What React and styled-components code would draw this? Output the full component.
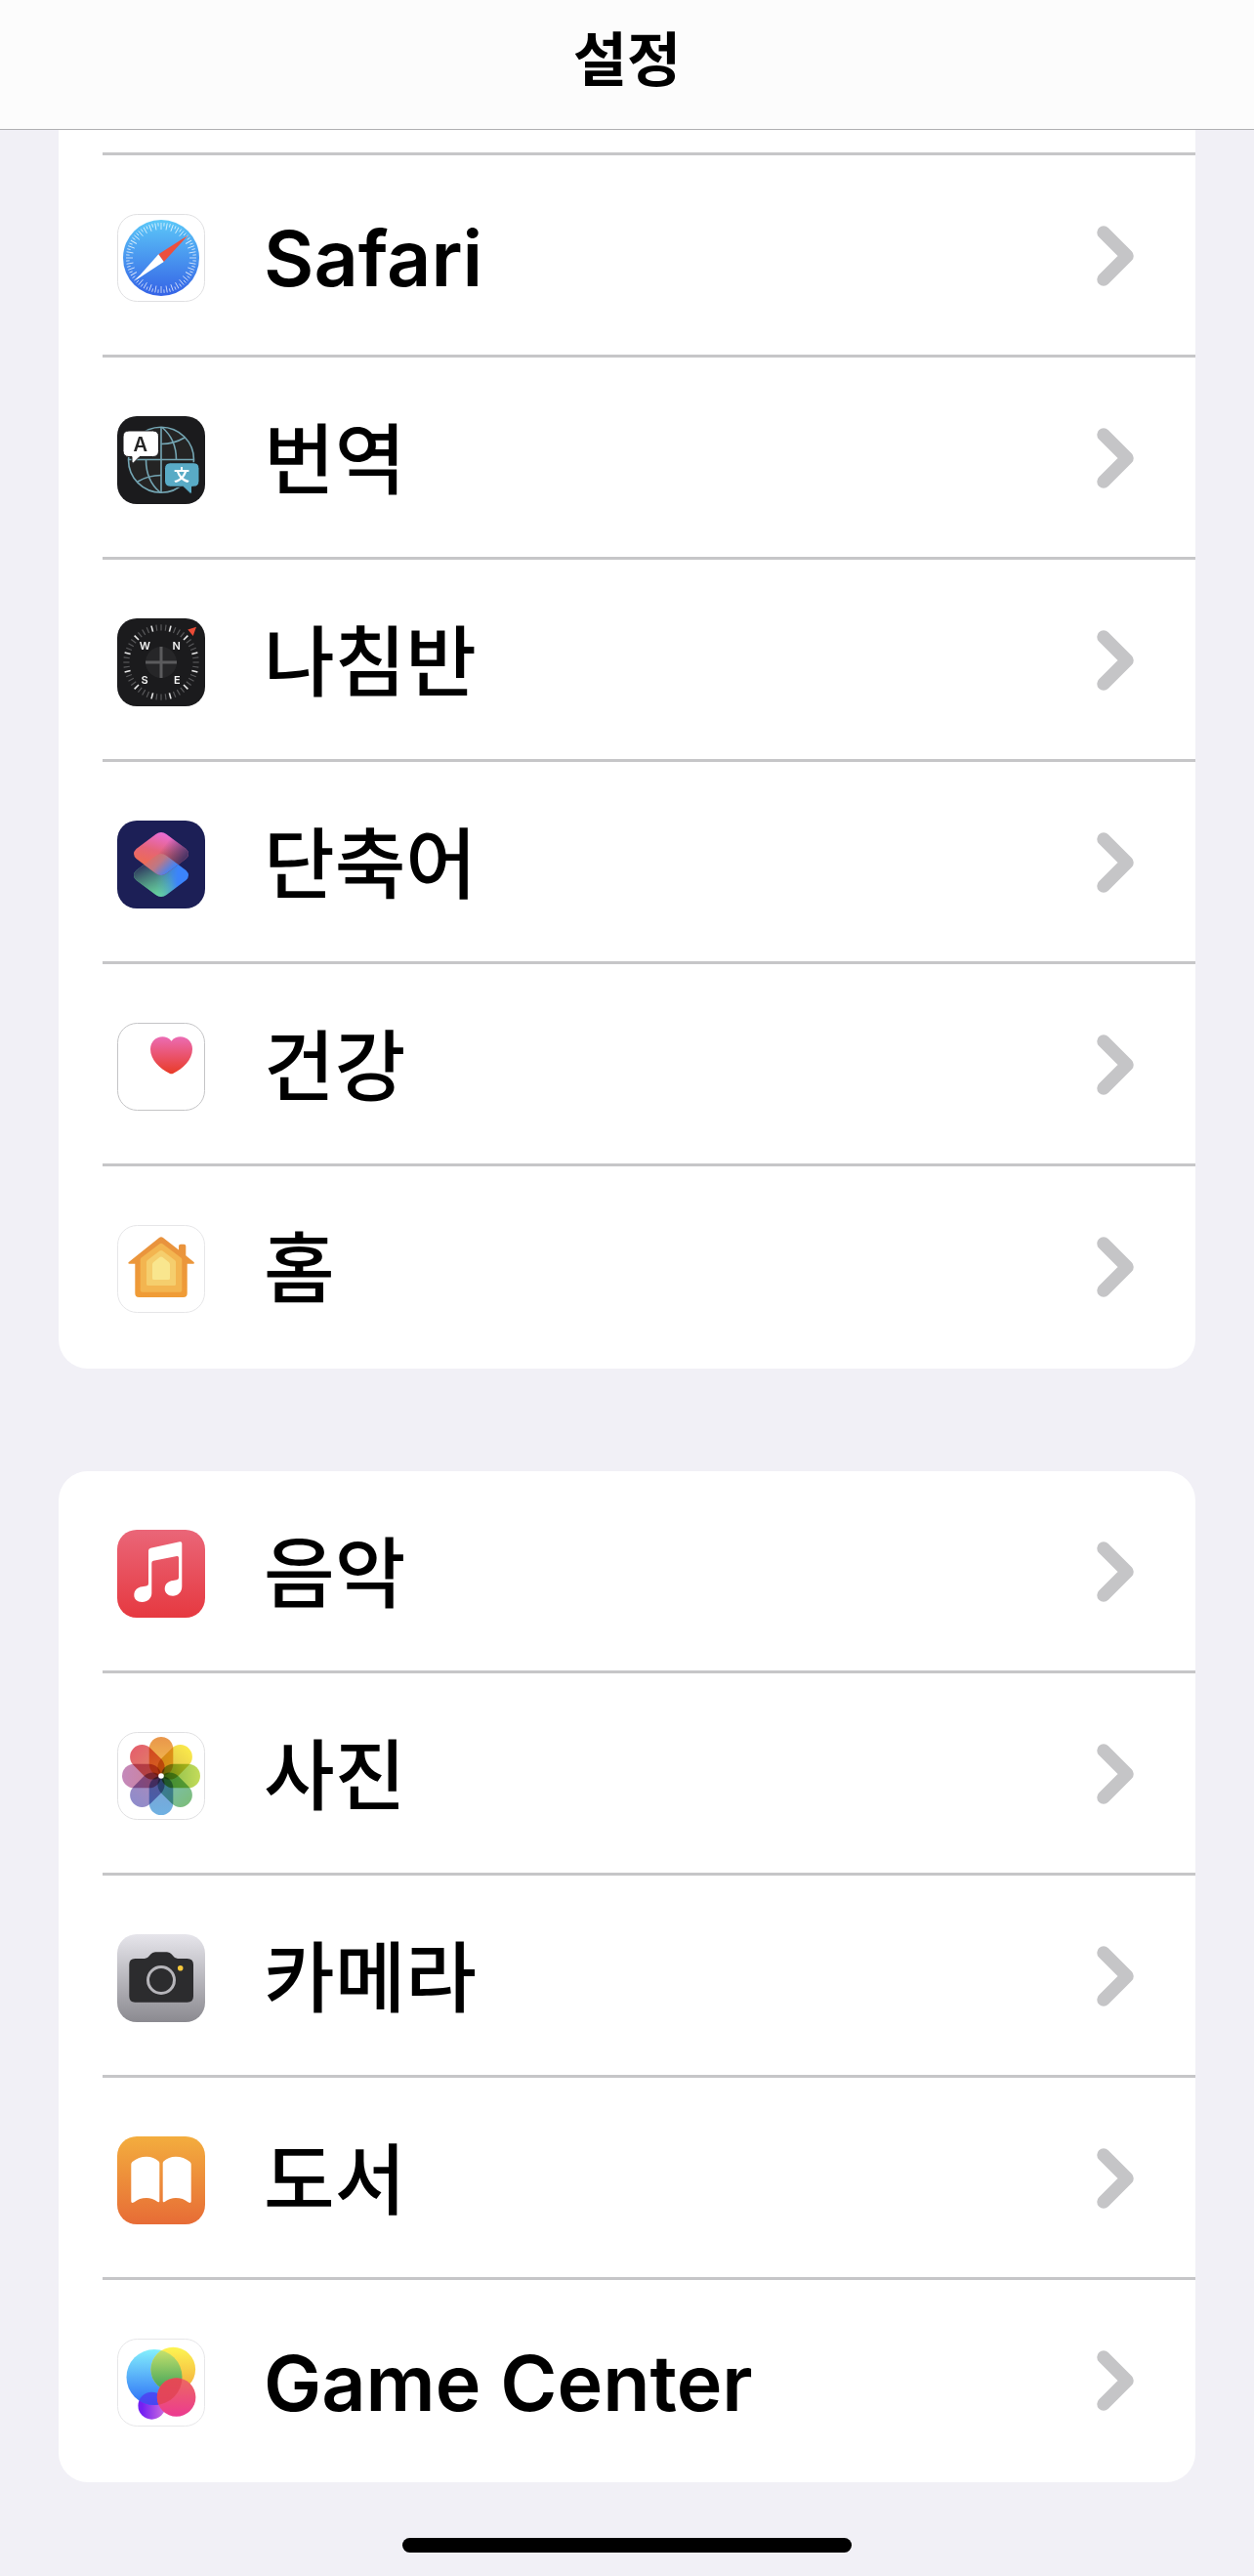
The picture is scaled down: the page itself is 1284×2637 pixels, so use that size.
import styled, { createGlobalStyle } from "styled-components";

const GlobalStyle = createGlobalStyle`
  * {
    box-sizing: border-box;
  }
  body {
    margin: 0;
    background-color: #f1f0f6;
    color: #000;
    font-family: Inter, "Noto Sans CJK KR", sans-serif;
  }
`;

const Page = styled.div`
  min-height: 100vh;
  display: flex;
  flex-direction: column;
`;

const Header = styled.header`
  display: flex;
  justify-content: center;
  padding: 16px 0 26px;
  background-color: #fcfcfc;
  border-bottom: 1px solid #b0b0b2;
`;

const Title = styled.h1`
  margin: 0;
  font-size: 60px;
  line-height: 90px;
  font-weight: 700;
`;

const Main = styled.main`
  display: flex;
  flex-direction: column;
  gap: 105px;
  padding: 0 60px;
`;

const Group = styled.ul`
  list-style: none;
  margin: 0;
  padding: 0 0 0 45px;
  background-color: #fff;
  border-radius: ${(props) => (props.$scrolled ? "0 0 30px 30px" : "30px")};
`;

const Item = styled.li`
  border-bottom: 3px solid #c6c6c8;

  &:last-child {
    border-bottom-color: transparent;
  }
`;

// the row that is scrolled away under the header
const HiddenItem = styled(Item)`
  height: 26px;
`;

const RowLink = styled.a`
  display: flex;
  align-items: center;
  height: 204px;
  padding: 6px 63px 0 15px;
  color: inherit;
  text-decoration: none;
`;

const Label = styled.span`
  flex: 1;
  margin-left: 60px;
  font-size: 79px;
  line-height: 120px;
  font-weight: ${(props) => (props.$latin ? 600 : 500)};
`;

const AppIcon = styled.svg`
  flex: none;
  width: 90px;
  height: 90px;
`;

const Chevron = styled.svg`
  flex: none;
  width: 38px;
  height: 62px;
  margin-bottom: 4px;
`;

const Footer = styled.footer`
  display: flex;
  justify-content: center;
  margin-top: auto;
  padding: 57px 0 24px;
`;

const HomeIndicator = styled.div`
  width: 460px;
  max-width: 60%;
  height: 15px;
  border-radius: 8px;
  background-color: #000;
`;

const Petal = styled.rect`
  mix-blend-mode: multiply;
`;

const Petals = styled.g`
  isolation: isolate;
`;

const Tile = ({ fill }) => <rect width="90" height="90" rx="20" fill={fill} />;

const OutlinedTile = ({ stroke }) => (
  <rect x="0.5" y="0.5" width="89" height="89" rx="20" fill="#fff" stroke={stroke} />
);

const Gradient = ({ id, from, to }) => (
  <linearGradient id={id} x1="0" y1="0" x2="0" y2="1">
    <stop offset="0" stopColor={from} />
    <stop offset="1" stopColor={to} />
  </linearGradient>
);

const SafariIcon = () => (
  <AppIcon viewBox="0 0 90 90" aria-hidden="true">
    <defs>
      <Gradient id="safari" from="#5cc8f8" to="#3563e6" />
    </defs>
    <OutlinedTile stroke="#e0e0e2" />
    <circle cx="45" cy="45" r="39" fill="url(#safari)" />
    {Array.from({ length: 72 }, (_, i) => (
      <line
        key={i}
        x1="45"
        x2="45"
        y1="9"
        y2={i % 2 ? 12.5 : 16}
        stroke="#fff"
        strokeOpacity="0.75"
        strokeWidth="0.9"
        transform={`rotate(${i * 5} 45 45)`}
      />
    ))}
    <path d="M72.7 21.7L42.3 41.3L47.7 49Z" fill="#ec4f3d" />
    <path d="M18.3 68.3L42.3 41.3L47.7 49Z" fill="#fff" />
  </AppIcon>
);

const TranslateIcon = () => (
  <AppIcon viewBox="0 0 90 90" aria-hidden="true">
    <Tile fill="#1b1b1d" />
    <g fill="none" stroke="#74a6b4" strokeWidth="1.6">
      <circle cx="45" cy="44.7" r="33.5" fill="#242424" />
      <path d="M45 11V78M12 44.5H78.5" />
      <path d="M46 11.5C56 20 60.5 31 60.5 44.5M45 28.5Q58 28.5 69 22" />
      <path d="M29.5 44.5C29.5 58 34 70 44 78M21 67Q32 60.5 45 60.5" />
    </g>
    <path
      d="M12 15H36.5Q42.5 15 42.5 21V35.5Q42.5 41.5 36.5 41.5H23L16.5 48Q15.3 48.5 15 47V41.5H12Q6 41.5 6 35.5V21Q6 15 12 15Z"
      fill="#fff"
      stroke="#1b1b1d"
      strokeWidth="1"
    />
    <path
      d="M54.5 47.7H78Q84 47.7 84 53.7V66.3Q84 72.3 78 72.3H76.5V78Q76 80 74.5 79L67.5 72.3H54.5Q48.5 72.3 48.5 66.3V53.7Q48.5 47.7 54.5 47.7Z"
      fill="#59abc6"
      stroke="#1b1b1d"
      strokeWidth="1"
    />
    <text x="23.7" y="36" fontSize="20" fontWeight="600" textAnchor="middle" fill="#242424">
      A
    </text>
    <text x="66" y="66" fontSize="16" fontWeight="700" textAnchor="middle" fill="#fff">
      文
    </text>
  </AppIcon>
);

const CompassIcon = () => (
  <AppIcon viewBox="0 0 90 90" aria-hidden="true">
    <Tile fill="#1b1b1d" />
    {Array.from({ length: 48 }, (_, i) => (
      <line
        key={i}
        x1="45"
        x2="45"
        y1="6.3"
        y2="12.5"
        stroke={i % 4 === 2 ? "#e8e8e8" : "#59595b"}
        strokeWidth={i % 4 === 2 ? 1.6 : 1.2}
        transform={`rotate(${i * 7.5} 45 45)`}
      />
    ))}
    <circle cx="45" cy="45" r="16" fill="#262628" />
    <path d="M45 29V61M29 45H61" stroke="#5b5b5d" strokeWidth="3" />
    <g fontSize="11" fontWeight="600" textAnchor="middle" fill="#f4f4f4">
      <text x="28.3" y="32.3">W</text>
      <text x="60.7" y="32.3">N</text>
      <text x="28" y="66.5">S</text>
      <text x="61.3" y="66.5">E</text>
    </g>
    <path d="M72.3 11.5L81 8.7L77.7 18Z" fill="#ec4b36" />
  </AppIcon>
);

const diamond =
  "M39.5 14Q45 10 50.5 14L70.5 29Q75.5 34 70.5 39L50.5 54Q45 58 39.5 54L19.5 39Q14.5 34 19.5 29Z";

const ShortcutsIcon = () => (
  <AppIcon viewBox="0 0 90 90" aria-hidden="true">
    <defs>
      <linearGradient id="shortA" x1="0.1" y1="0.7" x2="0.9" y2="0.4">
        <stop offset="0" stopColor="#5fd893" />
        <stop offset="0.45" stopColor="#4b9fc0" />
        <stop offset="0.75" stopColor="#3b84fb" />
      </linearGradient>
      <linearGradient id="shortShade" x1="0.1" y1="0.35" x2="0.5" y2="0.95">
        <stop offset="0" stopColor="#30395f" stopOpacity="0.95" />
        <stop offset="1" stopColor="#6fe09c" stopOpacity="0.75" />
      </linearGradient>
      <linearGradient id="shortFade" x1="0" y1="0" x2="1" y2="0">
        <stop offset="0" stopColor="#fff" />
        <stop offset="0.4" stopColor="#fff" />
        <stop offset="0.8" stopColor="#000" />
      </linearGradient>
      <mask id="shortMask" maskUnits="userSpaceOnUse" x="0" y="0" width="90" height="90">
        <rect x="16" y="33" width="58" height="46" fill="url(#shortFade)" />
      </mask>
      <linearGradient id="shortB" x1="0.6" y1="0" x2="0.3" y2="0.8">
        <stop offset="0" stopColor="#ea6ddd" />
        <stop offset="0.55" stopColor="#e56479" />
        <stop offset="1" stopColor="#ee6c52" />
      </linearGradient>
      <linearGradient id="shortC" x1="0.5" y1="0.4" x2="0.9" y2="0.65">
        <stop offset="0" stopColor="#2b2a58" stopOpacity="0" />
        <stop offset="1" stopColor="#3b2f63" stopOpacity="0.9" />
      </linearGradient>
      <linearGradient id="shortD" x1="0.35" y1="0.4" x2="0.8" y2="0.75">
        <stop offset="0" stopColor="#e96a5c" />
        <stop offset="0.5" stopColor="#bd7885" />
        <stop offset="1" stopColor="#3b84fb" />
      </linearGradient>
      <clipPath id="shortClip">
        <path d={diamond} transform="translate(0 22)" />
      </clipPath>
    </defs>
    <Tile fill="#1c1f56" />
    <path d={diamond} transform="translate(0 22)" fill="url(#shortA)" />
    <g mask="url(#shortMask)">
      <path d={diamond} transform="translate(0 22)" fill="url(#shortShade)" />
    </g>
    <path d={diamond} fill="url(#shortB)" />
    <path d={diamond} fill="url(#shortC)" />
    <path d={diamond} fill="url(#shortD)" clipPath="url(#shortClip)" />
  </AppIcon>
);

const HealthIcon = () => (
  <AppIcon viewBox="0 0 90 90" aria-hidden="true">
    <defs>
      <Gradient id="health" from="#eb6cb4" to="#e93b27" />
    </defs>
    <OutlinedTile stroke="#c4c4c6" />
    <path
      d="M55.5 18.7C58 15.5 61.5 14.3 64.5 14.3C71.5 14.3 77 19.5 77 27C77 38 67 47 57.5 51.7Q55.5 52.7 53.5 51.7C44 47 34 38 34 27C34 19.5 39.5 14.3 46.5 14.3C49.5 14.3 53 15.5 55.5 18.7Z"
      fill="url(#health)"
    />
  </AppIcon>
);

const HomeIcon = () => (
  <AppIcon viewBox="0 0 90 90" aria-hidden="true">
    <defs>
      <Gradient id="home" from="#e8923e" to="#f09c36" />
    </defs>
    <OutlinedTile stroke="#e6e6e8" />
    <path
      d="M43 13Q45 11.3 47 13L63 25.5V21.5Q63 19.7 65 19.7H68.3Q70.3 19.7 70.3 21.5V31.3L78.5 38Q79.5 39.7 78 39.7H71.7V70Q71.7 74 67.7 74H22.3Q18.3 74 18.3 70V39.7H12.5Q10.5 39.5 11.8 38Z"
      fill="url(#home)"
    />
    <path
      d="M43.5 19.3Q45 18.3 46.5 19.3L65.3 33.5Q66.3 34.3 66.3 35.5V67Q66.3 68.7 64.5 68.7H25.5Q23.7 68.7 23.7 67V35.5Q23.7 34.3 24.7 33.5Z"
      fill="#f3b550"
    />
    <path
      d="M43.5 26.5Q45 25.5 46.5 26.5L59 36Q60 37 60 38V60.5Q60 62 58.5 62H31.5Q30 62 30 60.5V38Q30 37 31 36Z"
      fill="#f5ce6d"
    />
    <path
      d="M43.5 33Q45 32 46.5 33L53 38.3Q54 39 54 40.5V54.5Q54 56 52.5 56H37.5Q36 56 36 54.5V40.5Q36 39 37 38.3Z"
      fill="#f9e68e"
    />
  </AppIcon>
);

const MusicIcon = () => (
  <AppIcon viewBox="0 0 90 90" aria-hidden="true">
    <defs>
      <Gradient id="music" from="#ea6678" to="#e63940" />
    </defs>
    <Tile fill="url(#music)" />
    <path
      d="M32 21.5Q32 19.3 34.2 18.7L64 12.3Q66.3 11.8 66.3 14V58C66.3 64 62 67.7 57 67.7C52 67.7 48.7 64.5 48.7 60.5C48.7 55.5 52 52.7 57 52L61 51.2Q63 50.8 63 49V28.5Q63 26.6 61 27L37 31.7Q35.3 32 35.3 34V65C35.3 70 31 74 25.5 74C20.5 74 17.3 70.8 17.3 67C17.3 62 20.5 59 25.5 58.3L30 57.5Q32 57 32 55Z"
      fill="#fff"
    />
  </AppIcon>
);

const petalColors = [
  ["#e9964b", "#f4c550"],
  ["#fae94b", "#d9b94a"],
  ["#c4dc5a", "#7fb548"],
  ["#7cbd7c", "#7cbfc0"],
  ["#6fb1e2", "#7f9fd0"],
  ["#8f8ccb", "#b18ab8"],
  ["#c489bb", "#cf7f92"],
  ["#e4606c", "#e08a66"],
];

const PhotosIcon = () => (
  <AppIcon viewBox="0 0 90 90" aria-hidden="true">
    <defs>
      {petalColors.map(([from, to], i) => (
        <Gradient key={i} id={`petal${i}`} from={from} to={to} />
      ))}
    </defs>
    <OutlinedTile stroke="#e0e0e2" />
    <Petals>
      {petalColors.map((_, i) => (
        <Petal
          key={i}
          x="32.7"
          y="5"
          width="24.6"
          height="40"
          rx="12.3"
          fill={`url(#petal${i})`}
          transform={`rotate(${i * 45} 45 45)`}
        />
      ))}
    </Petals>
    <circle cx="45" cy="45" r="2.8" fill="#fff" />
  </AppIcon>
);

const CameraIcon = () => (
  <AppIcon viewBox="0 0 90 90" aria-hidden="true">
    <defs>
      <Gradient id="camera" from="#e6e5eb" to="#8b8a90" />
    </defs>
    <Tile fill="url(#camera)" />
    <path
      d="M18.3 25H28Q31 25 33 22L34 20.8Q36 18.3 39 18.3H51Q54 18.3 56 20.8L57 22Q59 25 62 25H71.7Q78 25 78 31V63.5Q78 69.7 71.7 69.7H18.3Q12.3 69.7 12.3 63.5V31Q12.3 25 18.3 25Z"
      fill="#2c2c2e"
    />
    <circle cx="45" cy="47" r="13.5" fill="#2c2c2e" stroke="#b6b5ba" strokeWidth="3" />
    <circle cx="64.7" cy="34.7" r="2.8" fill="#f6c83c" />
  </AppIcon>
);

const BooksIcon = () => (
  <AppIcon viewBox="0 0 90 90" aria-hidden="true">
    <defs>
      <Gradient id="books" from="#f3ad3e" to="#e76c36" />
    </defs>
    <Tile fill="url(#books)" />
    <path
      d="M14.3 28.5Q14.3 27 15.5 26Q22 20.7 30 20.7Q37.5 20.7 42.5 25.5Q43.3 26.3 43.3 27.5V66Q43.3 68 41.5 67Q36 63 30 63Q22.5 63 17.5 67.3Q14.3 69 14.3 66.5Z"
      fill="#fff"
    />
    <path
      d="M75.7 28.5Q75.7 27 74.5 26Q68 20.7 60 20.7Q52.5 20.7 47.5 25.5Q46.7 26.3 46.7 27.5V66Q46.7 68 48.5 67Q54 63 60 63Q67.5 63 72.5 67.3Q75.7 69 75.7 66.5Z"
      fill="#fff"
    />
  </AppIcon>
);

const GameCenterIcon = () => (
  <AppIcon viewBox="0 0 90 90" aria-hidden="true">
    <defs>
      <Gradient id="gcBlue" from="#84effc" to="#2a6df6" />
      <Gradient id="gcYellow" from="#fdf552" to="#f3a83c" />
      <Gradient id="gcGreen" from="#cfe66e" to="#3a9f58" />
      <Gradient id="gcRed" from="#ec6a60" to="#ec3a90" />
      <linearGradient id="gcPurple" x1="0" y1="0" x2="1" y2="0">
        <stop offset="0.15" stopColor="#7420f2" />
        <stop offset="0.9" stopColor="#c667e0" />
      </linearGradient>
      <clipPath id="gcBlueClip">
        <circle cx="38" cy="39.5" r="28.5" />
      </clipPath>
      <clipPath id="gcRedClip">
        <circle cx="60.6" cy="60" r="19.8" />
      </clipPath>
    </defs>
    <OutlinedTile stroke="#e6e6e8" />
    <circle cx="35.4" cy="68.7" r="14" fill="url(#gcPurple)" />
    <circle cx="38" cy="39.5" r="28.5" fill="url(#gcBlue)" />
    <circle cx="57.3" cy="31.5" r="22.8" fill="url(#gcYellow)" />
    <g clipPath="url(#gcBlueClip)">
      <circle cx="57.3" cy="31.5" r="22.8" fill="url(#gcGreen)" />
      <circle cx="35.4" cy="68.7" r="14" fill="#4f3cf0" fillOpacity="0.8" />
    </g>
    <circle cx="60.6" cy="60" r="19.8" fill="url(#gcRed)" />
    <g clipPath="url(#gcRedClip)">
      <circle cx="38" cy="39.5" r="28.5" fill="#e04050" fillOpacity="0.75" />
    </g>
  </AppIcon>
);

const systemApps = [
  { name: "Safari", icon: SafariIcon, latin: true },
  { name: "번역", icon: TranslateIcon },
  { name: "나침반", icon: CompassIcon },
  { name: "단축어", icon: ShortcutsIcon },
  { name: "건강", icon: HealthIcon },
  { name: "홈", icon: HomeIcon },
];

const mediaApps = [
  { name: "음악", icon: MusicIcon },
  { name: "사진", icon: PhotosIcon },
  { name: "카메라", icon: CameraIcon },
  { name: "도서", icon: BooksIcon },
  { name: "Game Center", icon: GameCenterIcon, latin: true },
];

const Row = ({ app }) => {
  const Icon = app.icon;
  return (
    <Item>
      <RowLink href="#">
        <Icon />
        <Label $latin={app.latin}>{app.name}</Label>
        <Chevron viewBox="0 0 38 62" aria-hidden="true">
          <path
            d="M7 7L31 31L7 55"
            fill="none"
            stroke="#c5c5c7"
            strokeWidth="13.5"
            strokeLinecap="round"
            strokeLinejoin="round"
          />
        </Chevron>
      </RowLink>
    </Item>
  );
};

const App = () => {
  return (
    <Page lang="ko">
      <GlobalStyle />
      <Header>
        <Title>설정</Title>
      </Header>
      <Main>
        <Group $scrolled>
          <HiddenItem aria-hidden="true" />
          {systemApps.map((app) => (
            <Row key={app.name} app={app} />
          ))}
        </Group>
        <Group>
          {mediaApps.map((app) => (
            <Row key={app.name} app={app} />
          ))}
        </Group>
      </Main>
      <Footer>
        <HomeIndicator />
      </Footer>
    </Page>
  );
};

export default App;
